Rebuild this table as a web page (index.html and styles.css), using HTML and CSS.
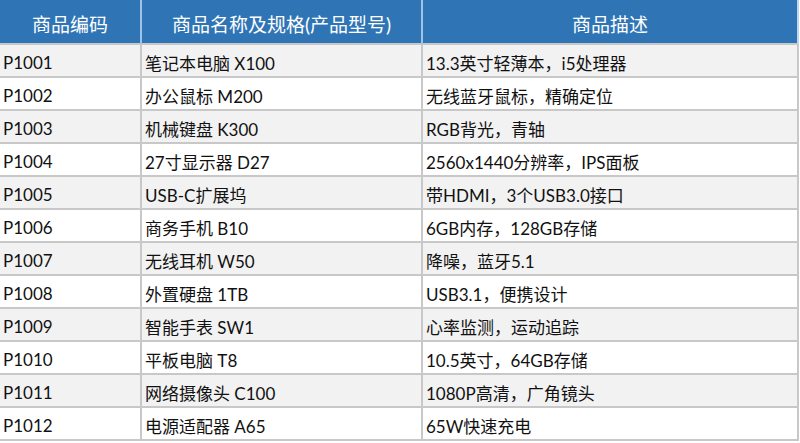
FILE: index.html
```html
<!DOCTYPE html>
<html lang="zh">
<head>
<meta charset="utf-8">
<link rel="stylesheet" href="styles.css">
</head>
<body>
<table class="grid">
  <colgroup>
    <col class="c1"><col class="c2"><col class="c3">
  </colgroup>
  <thead>
    <tr><th>商品编码</th><th>商品名称及规格(产品型号)</th><th>商品描述</th></tr>
  </thead>
  <tbody>
    <tr><td>P1001</td><td>笔记本电脑 X100</td><td>13.3英寸轻薄本，i5处理器</td></tr>
    <tr><td>P1002</td><td>办公鼠标 M200</td><td>无线蓝牙鼠标，精确定位</td></tr>
    <tr><td>P1003</td><td>机械键盘 K300</td><td>RGB背光，青轴</td></tr>
    <tr><td>P1004</td><td>27寸显示器 D27</td><td>2560x1440分辨率，IPS面板</td></tr>
    <tr><td>P1005</td><td>USB-C扩展坞</td><td>带HDMI，3个USB3.0接口</td></tr>
    <tr><td>P1006</td><td>商务手机 B10</td><td>6GB内存，128GB存储</td></tr>
    <tr><td>P1007</td><td>无线耳机 W50</td><td>降噪，蓝牙5.1</td></tr>
    <tr><td>P1008</td><td>外置硬盘 1TB</td><td>USB3.1，便携设计</td></tr>
    <tr><td>P1009</td><td>智能手表 SW1</td><td>心率监测，运动追踪</td></tr>
    <tr><td>P1010</td><td>平板电脑 T8</td><td>10.5英寸，64GB存储</td></tr>
    <tr><td>P1011</td><td>网络摄像头 C100</td><td>1080P高清，广角镜头</td></tr>
    <tr><td>P1012</td><td>电源适配器 A65</td><td>65W快速充电</td></tr>
  </tbody>
</table>
</body>
</html>
```
FILE: styles.css
```css
html, body {
  margin: 0;
  padding: 0;
  background: #ffffff;
}
.grid {
  border-collapse: separate;
  border-spacing: 0;
  table-layout: fixed;
  width: 799px;
  font-family: Lato, "Noto Sans CJK SC", sans-serif;
  color: #111;
}
.c1 { width: 142px; }
.c2 { width: 281px; }
.c3 { width: 376px; }
.grid th {
  height: 45px;
  padding: 3px 0 0 0;
  background: #2f75b5;
  color: #fff;
  font-weight: normal;
  font-size: 19px;
  text-align: center;
  border-right: 2px solid #9dc3e6;
  border-bottom: 2px solid #c8c8c8;
  box-sizing: border-box;
}
.grid th:last-child { border-right-color: #bcd6ef; }
.grid td {
  height: 33px;
  padding: 3px 0 0 3px;
  font-size: 17px;
  border-right: 2px solid #c8c8c8;
  border-bottom: 2px solid #c8c8c8;
  box-sizing: border-box;
  white-space: nowrap;
  overflow: hidden;
}
.grid tbody tr:nth-child(odd) td { background: #f2f2f2; }
.grid tbody tr:nth-child(even) td { background: #ffffff; }
```
